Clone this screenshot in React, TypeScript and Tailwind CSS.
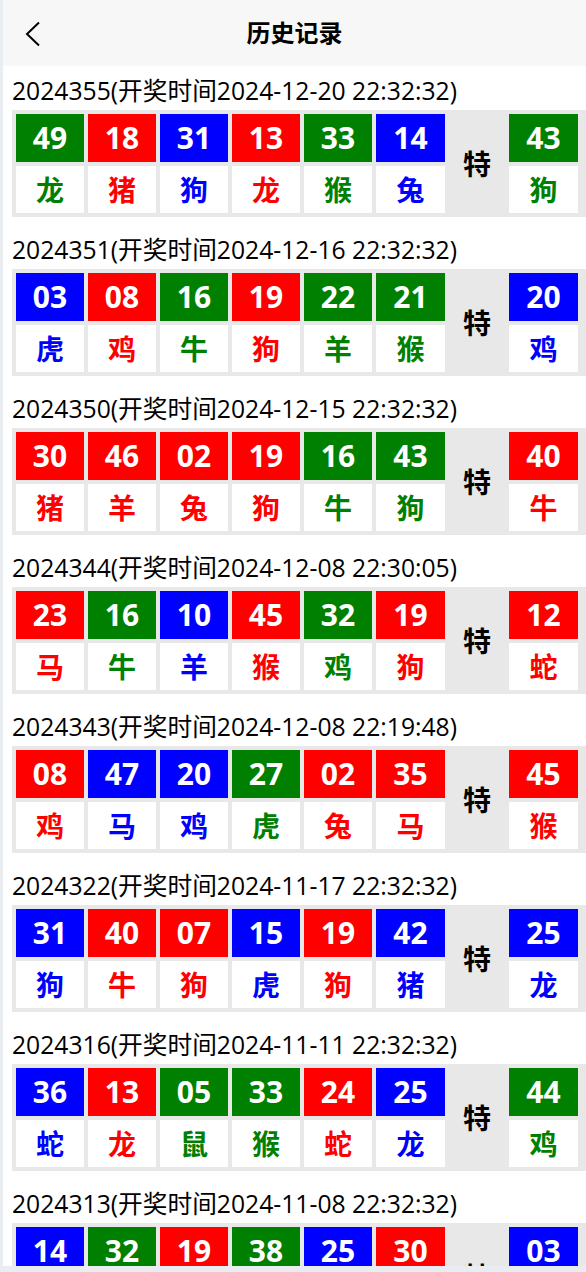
type Color = "r" | "g" | "b";

interface Ball {
  num: string;
  zodiac: string;
  color: Color;
}

interface Draw {
  issue: string;
  time: string;
  balls: Ball[];
  special: Ball;
}

const bg: Record<Color, string> = {
  r: "bg-[#ff0000]",
  g: "bg-[#008000]",
  b: "bg-[#0000ff]",
};

const fg: Record<Color, string> = {
  r: "text-[#ff0000]",
  g: "text-[#008000]",
  b: "text-[#0000ff]",
};

const b = (num: string, zodiac: string, color: Color): Ball => ({
  num,
  zodiac,
  color,
});

const draws: Draw[] = [
  {
    issue: "2024355",
    time: "2024-12-20 22:32:32",
    balls: [
      b("49", "龙", "g"),
      b("18", "猪", "r"),
      b("31", "狗", "b"),
      b("13", "龙", "r"),
      b("33", "猴", "g"),
      b("14", "兔", "b"),
    ],
    special: b("43", "狗", "g"),
  },
  {
    issue: "2024351",
    time: "2024-12-16 22:32:32",
    balls: [
      b("03", "虎", "b"),
      b("08", "鸡", "r"),
      b("16", "牛", "g"),
      b("19", "狗", "r"),
      b("22", "羊", "g"),
      b("21", "猴", "g"),
    ],
    special: b("20", "鸡", "b"),
  },
  {
    issue: "2024350",
    time: "2024-12-15 22:32:32",
    balls: [
      b("30", "猪", "r"),
      b("46", "羊", "r"),
      b("02", "兔", "r"),
      b("19", "狗", "r"),
      b("16", "牛", "g"),
      b("43", "狗", "g"),
    ],
    special: b("40", "牛", "r"),
  },
  {
    issue: "2024344",
    time: "2024-12-08 22:30:05",
    balls: [
      b("23", "马", "r"),
      b("16", "牛", "g"),
      b("10", "羊", "b"),
      b("45", "猴", "r"),
      b("32", "鸡", "g"),
      b("19", "狗", "r"),
    ],
    special: b("12", "蛇", "r"),
  },
  {
    issue: "2024343",
    time: "2024-12-08 22:19:48",
    balls: [
      b("08", "鸡", "r"),
      b("47", "马", "b"),
      b("20", "鸡", "b"),
      b("27", "虎", "g"),
      b("02", "兔", "r"),
      b("35", "马", "r"),
    ],
    special: b("45", "猴", "r"),
  },
  {
    issue: "2024322",
    time: "2024-11-17 22:32:32",
    balls: [
      b("31", "狗", "b"),
      b("40", "牛", "r"),
      b("07", "狗", "r"),
      b("15", "虎", "b"),
      b("19", "狗", "r"),
      b("42", "猪", "b"),
    ],
    special: b("25", "龙", "b"),
  },
  {
    issue: "2024316",
    time: "2024-11-11 22:32:32",
    balls: [
      b("36", "蛇", "b"),
      b("13", "龙", "r"),
      b("05", "鼠", "g"),
      b("33", "猴", "g"),
      b("24", "蛇", "r"),
      b("25", "龙", "b"),
    ],
    special: b("44", "鸡", "g"),
  },
  {
    issue: "2024313",
    time: "2024-11-08 22:32:32",
    balls: [
      b("14", "兔", "b"),
      b("32", "鸡", "g"),
      b("19", "狗", "r"),
      b("38", "兔", "g"),
      b("25", "龙", "b"),
      b("30", "猪", "r"),
    ],
    special: b("03", "虎", "b"),
  },
];

const font = "font-['Open_Sans','Noto_Sans_CJK_SC',sans-serif]";

function NumCell({ ball, wide }: { ball: Ball; wide?: boolean }) {
  return (
    <div
      className={`h-[48px] ${wide ? "w-[69px]" : "w-[68px]"} ${bg[ball.color]} flex items-center justify-center text-[30px] font-bold text-white leading-none`}
    >
      {ball.num}
    </div>
  );
}

function ZodiacCell({ ball, wide }: { ball: Ball; wide?: boolean }) {
  return (
    <div
      className={`h-[47px] ${wide ? "w-[69px]" : "w-[68px]"} bg-white flex items-center justify-center text-[28px] font-bold leading-none ${fg[ball.color]}`}
    >
      {ball.zodiac}
    </div>
  );
}

function DrawBlock({ draw }: { draw: Draw }) {
  return (
    <div className="mb-[8px]">
      <div className="h-[44px] pl-[9px] flex items-center pt-[7px] text-[24.7px] text-black leading-none whitespace-nowrap">
        {draw.issue}(开奖时间{draw.time})
      </div>
      <div className="ml-[9px] bg-[#e8e8e8] p-[4px] flex gap-[4px]">
        {draw.balls.map((ball, i) => (
          <div key={i} className="flex flex-col gap-[4px]">
            <NumCell ball={ball} wide={i === 5} />
            <ZodiacCell ball={ball} wide={i === 5} />
          </div>
        ))}
        <div className="w-[56px] flex items-center justify-center text-[28px] font-bold text-black">
          特
        </div>
        <div className="flex flex-col gap-[4px]">
          <NumCell ball={draw.special} wide />
          <ZodiacCell ball={draw.special} wide />
        </div>
      </div>
    </div>
  );
}

export default function App() {
  return (
    <div className={`h-[1272px] bg-[#e9ecf1] pl-[3px] pb-[6px] overflow-hidden ${font}`}>
      <div className="h-full bg-white overflow-hidden">
        <div className="h-[66px] bg-[#f7f7f7] relative flex items-center justify-center">
          <svg
            className="absolute left-[21px] top-[21px]"
            width="18"
            height="26"
            viewBox="0 0 18 26"
            fill="none"
          >
            <path d="M15 1.5 L3 13 L15 24.5" stroke="#000" strokeWidth="2" />
          </svg>
          <span className="text-[24px] font-bold text-black">历史记录</span>
        </div>
        {draws.map((d) => (
          <DrawBlock key={d.issue} draw={d} />
        ))}
      </div>
    </div>
  );
}
